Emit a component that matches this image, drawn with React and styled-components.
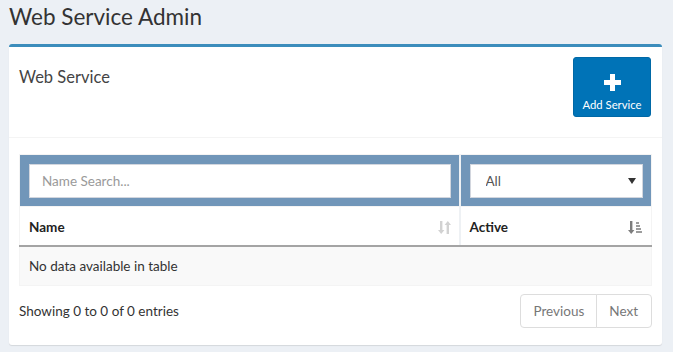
import React from "react";
import styled, { createGlobalStyle } from "styled-components";

const GlobalStyle = createGlobalStyle`
  html, body { margin: 0; padding: 0; }
  body {
    background: #ecf0f5;
    font-family: Lato, "Liberation Sans", sans-serif;
    color: #333;
    font-size: 13.5px;
  }
  * { box-sizing: border-box; }
`;

const Page = styled.div`
  padding: 0 11px 6px 9px;
`;

const PageTitle = styled.h1`
  margin: 0;
  padding: 3px 0 0 0;
  font-size: 22.5px;
  line-height: 28px;
  font-weight: 400;
  color: #333;
`;

const Box = styled.section`
  margin-top: 13px;
  background: #fff;
  border-top: 3px solid #3c8dbc;
  border-radius: 3px;
  box-shadow: 0 1px 1px rgba(0, 0, 0, 0.1);
`;

const BoxHeader = styled.div`
  display: flex;
  justify-content: space-between;
  align-items: flex-start;
  padding: 10px;
  border-bottom: 1px solid #f4f4f4;
`;

const BoxTitle = styled.h3`
  margin: 11px 0 0 0;
  font-size: 16.5px;
  line-height: 18px;
  font-weight: 400;
  color: #444;
`;

const AppButton = styled.button`
  width: 78px;
  height: 60px;
  margin: 0 1px 10px 0;
  background: #0073b7;
  border: 1px solid #0068a6;
  border-radius: 3px;
  color: #fff;
  font-family: inherit;
  font-size: 11.3px;
  display: flex;
  flex-direction: column;
  align-items: center;
  padding: 16px 0 0 0;
  gap: 7px;
  cursor: pointer;
`;

const BoxBody = styled.div`
  padding: 10px 10px 15px 10px;
`;

const Table = styled.table`
  width: 100%;
  margin-top: 6px;
  margin-bottom: 6px;
  border-collapse: collapse;
  border: 1px solid #f4f4f4;
  table-layout: fixed;
`;

const Col = styled.col`
  width: ${(p) => p.$width || "auto"};
`;

const FilterRow = styled.tr`
  background: #7196b9;
`;

const FilterCell = styled.td`
  padding: 9px 8px 8px 9px;
  border-bottom: 1px solid #f4f4f4;
  border-left: ${(p) => (p.$divider ? "2px solid #eef1f4" : "none")};
`;

const TextInput = styled.input`
  display: block;
  width: 100%;
  height: 34px;
  padding: 6px 12px;
  border: 1px solid #d2d6de;
  background: #fff;
  font-family: inherit;
  font-size: 13.5px;
  color: #555;
  outline: none;
  &::placeholder { color: #9a9a9a; }
`;

const SelectWrap = styled.div`
  position: relative;
`;

const Select = styled.select`
  display: block;
  width: 100%;
  height: 34px;
  padding: 6px 15px;
  border: 1px solid #d2d6de;
  background: #fff;
  font-family: inherit;
  font-size: 13.5px;
  color: #555;
  appearance: none;
  -webkit-appearance: none;
  border-radius: 0;
  outline: none;
`;

const SelectArrow = styled.span`
  position: absolute;
  right: 7px;
  top: 14px;
  width: 0;
  height: 0;
  border-left: 4px solid transparent;
  border-right: 4px solid transparent;
  border-top: 6px solid #333;
  pointer-events: none;
`;

const HeadCell = styled.th`
  padding: 10px 8px 8px 9px;
  text-align: left;
  font-weight: 700;
  font-size: 13.5px;
  line-height: 20px;
  color: #222;
  border-bottom: 2px solid #a4a4a4;
  border-left: ${(p) => (p.$divider ? "2px solid #eef1f4" : "none")};
`;

const HeadInner = styled.div`
  display: flex;
  justify-content: space-between;
  align-items: center;
`;

const EmptyRow = styled.tr`
  background: #f9f9f9;
`;

const EmptyCell = styled.td`
  padding: 9px 8px 9px 9px;
  line-height: 20px;
  color: #333;
  border-bottom: 1px solid #f4f4f4;
`;

const Footer = styled.div`
  display: flex;
  justify-content: space-between;
  align-items: center;
`;

const Info = styled.div`
  color: #333;
  font-size: 13.5px;
`;

const Pagination = styled.div`
  display: flex;
  margin: 2px 0;
`;

const PageButton = styled.button`
  padding: 6px ${(p) => (p.$first ? "12px" : "13px")} 6px 12px;
  line-height: 20px;
  font-family: inherit;
  font-size: 13.5px;
  color: #777;
  background: #fff;
  border: 1px solid #ddd;
  margin-left: ${(p) => (p.$first ? "0" : "-1px")};
  border-radius: ${(p) => (p.$first ? "4px 0 0 4px" : "0 4px 4px 0")};
  cursor: default;
`;

const SortBoth = () => (
  <svg width="13" height="15" viewBox="0 0 13 15" aria-hidden="true">
    <g fill="#d2d2d2">
      <rect x="2" y="1" width="2.4" height="10" />
      <polygon points="0,10 6.4,10 3.2,14" />
      <rect x="8.6" y="4" width="2.4" height="10" />
      <polygon points="6.6,5 13,5 9.8,1" />
    </g>
  </svg>
);

const SortAsc = () => (
  <svg width="15" height="15" viewBox="0 0 15 15" aria-hidden="true">
    <g fill="#7d7d7d">
      <rect x="2" y="1" width="2.4" height="10" />
      <polygon points="0,10 6.4,10 3.2,14" />
    </g>
    <g fill="#9c9c9c">
      <rect x="8" y="2" width="3" height="2" />
      <rect x="8" y="5" width="4" height="2" />
      <rect x="8" y="8" width="5" height="2" />
      <rect x="8" y="11" width="6" height="2" />
    </g>
  </svg>
);

const PlusIcon = () => (
  <svg width="17" height="17" viewBox="0 0 17 17" aria-hidden="true">
    <path d="M6 0h5v6h6v5h-6v6H6v-6H0V6h6z" fill="#fff" />
  </svg>
);

export default function App() {
  return (
    <>
      <GlobalStyle />
      <Page>
        <PageTitle>Web Service Admin</PageTitle>
        <Box>
          <BoxHeader>
            <BoxTitle>Web Service</BoxTitle>
            <AppButton>
              <PlusIcon />
              <span>Add Service</span>
            </AppButton>
          </BoxHeader>
          <BoxBody>
            <Table>
              <colgroup>
                <Col $width="440px" />
                <Col />
              </colgroup>
              <thead>
                <FilterRow>
                  <FilterCell>
                    <TextInput placeholder="Name Search..." />
                  </FilterCell>
                  <FilterCell $divider>
                    <SelectWrap>
                      <Select defaultValue="All">
                        <option>All</option>
                        <option>Yes</option>
                        <option>No</option>
                      </Select>
                      <SelectArrow />
                    </SelectWrap>
                  </FilterCell>
                </FilterRow>
                <tr>
                  <HeadCell>
                    <HeadInner>
                      <span>Name</span>
                      <SortBoth />
                    </HeadInner>
                  </HeadCell>
                  <HeadCell $divider>
                    <HeadInner>
                      <span>Active</span>
                      <SortAsc />
                    </HeadInner>
                  </HeadCell>
                </tr>
              </thead>
              <tbody>
                <EmptyRow>
                  <EmptyCell colSpan={2}>No data available in table</EmptyCell>
                </EmptyRow>
              </tbody>
            </Table>
            <Footer>
              <Info>Showing 0 to 0 of 0 entries</Info>
              <Pagination>
                <PageButton $first>Previous</PageButton>
                <PageButton>Next</PageButton>
              </Pagination>
            </Footer>
          </BoxBody>
        </Box>
      </Page>
    </>
  );
}
